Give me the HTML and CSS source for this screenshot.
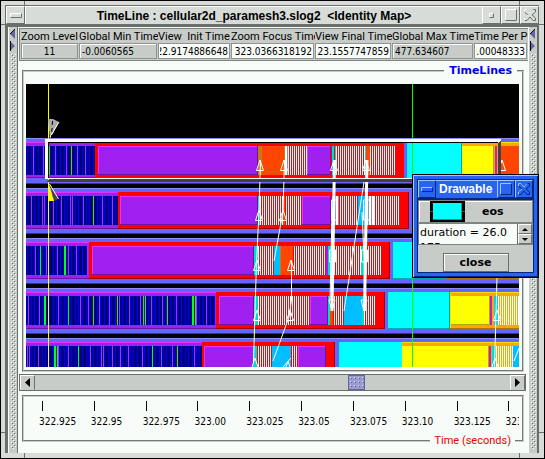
FILE: index.html
```html
<!DOCTYPE html>
<html lang="en">
<head>
<meta charset="utf-8">
<title>TimeLine</title>
<link rel="stylesheet" href="styles.css">
</head>
<body>
<div class="window">
  <header class="titlebar">
    <button class="wbtn" aria-label="Window menu"><svg width="12" height="5" viewBox="0 0 12 5"><path d="M.5 4.500V.5h11" fill="none" stroke="#fff"/><path d="M11.500 .5v4H.5" fill="none" stroke="#697069"/></svg></button>
    <h1 class="title">TimeLine : cellular2d_paramesh3.slog2  &lt;Identity Map&gt;</h1>
    <button class="wbtn" aria-label="Minimize"><svg width="5" height="5" viewBox="0 0 5 5"><path d="M.5 4.500V.5h4" fill="none" stroke="#fff"/><path d="M4.500 .5v4H.5" fill="none" stroke="#697069"/></svg></button>
    <button class="wbtn" aria-label="Maximize"><svg width="12" height="12" viewBox="0 0 12 12"><path d="M.5 11.500V.5h11" fill="none" stroke="#fff"/><path d="M11.500 .5v11H.5" fill="none" stroke="#697069"/></svg></button>
    <button class="wbtn" aria-label="Close"><svg width="14" height="14" viewBox="0 0 14 14"><path d="M1.500 4V1.500H4L7 5l3-3.500h2.500V4L9 7l3.500 3v2.500H10L7 9l-3 3.500H1.500V10L5 7Z" fill="#d8dcd8" stroke="#697069"/><path d="M1.500 4V1.500H4L7 5l3-3.500M1.500 12.500V10L5 7" fill="none" stroke="#fff"/></svg></button>
  </header>
  <div class="client">
    <div class="divider">
      <svg width="6" height="25" viewBox="0 0 6 25"><path d="M5 1v10L0 6Z" fill="#6464a0"/><path d="M5 1L0 6" stroke="#000"/><path d="M0 13v10l5-5Z" fill="#6464a0"/><path d="M.5 13v10" stroke="#000"/></svg>
      <div class="grip"></div>
    </div>
    <main class="main">
      <form class="fields">
        <label>Zoom Level<input class="center" readonly value="11"></label>
        <label>Global Min Time<input readonly value="-0.0060565"></label>
        <label>View  Init Time<input class="tail" value="322.9174886648"></label>
        <label>Zoom Focus Time<input class="tail" value="323.0366318192"></label>
        <label>View Final Time<input class="tail" value="323.1557747859"></label>
        <label>Global Max Time<input readonly value="477.634607"></label>
        <label>Time Per Pixel<input class="tail" value="0.00048333"></label>
      </form>
      <fieldset class="panel lines">
        <legend>TimeLines</legend>
        <svg class="canvas" viewBox="26 84 493 283" shape-rendering="crispEdges" role="img" aria-label="Process timelines">
          <defs>
            <pattern id="rw" width="2" height="10" patternUnits="userSpaceOnUse"><rect width="2" height="10" fill="#f00"/><rect width="1" height="10" fill="#fff"/></pattern>
            <pattern id="ow" width="2" height="10" patternUnits="userSpaceOnUse"><rect width="2" height="10" fill="#ffa500"/><rect width="1" height="10" fill="#fff"/></pattern>
            <pattern id="gw" width="3" height="10" patternUnits="userSpaceOnUse"><rect width="3" height="10" fill="#8c96aa"/><rect width="2" height="10" fill="#fff"/></pattern>
            <pattern id="nv" width="11" height="10" patternUnits="userSpaceOnUse"><rect width="11" height="10" fill="#00008c"/><path d="M1.500 0v10M5.500 0v10" stroke="#0000f0"/><path d="M3.500 0v10M7.500 0v10" stroke="#00005a"/><path d="M9.500 0v10" stroke="#0000dc"/></pattern>
            <g id="band"><path fill="#6464ff" d="M26 0h493v46H26z"/><path fill="#8c8cff" d="M26 0h493v1H26z"/><path fill="#3232a0" d="M26 45h493v1H26z"/></g>
            <path id="head" d="M0 0L-3.500 10.500H3.500Z" fill="none"/>
          </defs>
          <path fill="#000" d="M26 84h493v283H26z"/>
          <use href="#band" y="138"/><use href="#band" y="188"/><use href="#band" y="238"/><use href="#band" y="288"/><use href="#band" y="338"/>

          <g fill="#a020f0"><path d="M26 142h69v36H26zM26 192h92v37H26zM26 242h63v37H26zM26 292h190v37H26zM26 342h176v25H26z"/></g>
          <g fill="#e632ff"><path d="M26 142h69v1H26zM26 192h92v1H26zM26 242h63v1H26zM26 292h190v1H26zM26 342h176v1H26z"/></g>
          <g fill="#6e14a0"><path d="M26 177h69v1H26zM26 228h92v1H26zM26 278h63v1H26zM26 328h190v1H26z"/></g>

          <g fill="#f00"><path d="M95 142h309v37H95zM118 192h291v37H118zM89 242h301v37H89zM216 292h169v37H216zM202 342h133v25H202z"/></g>
          <g fill="#aa0000"><path d="M408 192h1v37H118v-1h290zM389 242h1v37H89v-1h300zM384 292h1v37H216v-1h168zM334 342h1v25h-1z"/></g>
          <g fill="#0ff"><path d="M407 142h55v37h-55zM393 242h53v37h-53zM388 292h62v37h-62zM339 342h63v25h-63z"/></g>
          <path fill="#00aaaa" d="M461 142h1v37h-1zM393 278h53v1h-53zM388 328h62v1h-62zM449 292h1v37h-1z"/>
          <g fill="#ffa500"><path d="M462 142h57v37h-57zM446 242h73v37h-73zM450 292h69v37h-69zM402 342h117v25H402z"/></g>
          <path fill="#ffdc00" d="M462 142h57v1h-57zM450 292h69v1h-69v36h1v-36zM402 342h117v1H402z"/>
          <path fill="#b47300" d="M450 328h69v1h-69zM446 278h73v1h-73z"/>

          <path fill="url(#nv)" d="M26 146h19v29H26zM49 146h46v29H49zM26 196h92v29H26zM26 246h62v29H26zM26 296h189v29H26zM26 346h176v21H26z"/>
          <path stroke="#a032ff" d="M33.500 146v29M43.500 146v29M55.500 146v29M66.500 146v29M77.500 146v29M85.500 146v29M31.500 196v29M42.500 196v29M44.500 196v29M53.500 196v29M61.500 196v29M70.500 196v29M72.500 196v29M83.500 196v29M102.500 196v29M112.500 196v29M35.500 246v29M46.500 246v29M57.500 246v29M68.500 246v29M76.500 246v29M87.500 246v29M28.500 296v29M39.500 296v29M58.500 296v29M80.500 296v29M88.500 296v29M99.500 296v29M109.500 296v29M119.500 296v29M129.500 296v29M140.500 296v29M151.500 296v29M162.500 296v29M176.500 296v29M196.500 296v29M206.500 296v29M27.500 346v21M29.500 346v21M38.500 346v21M58.500 346v21M68.500 346v21M90.500 346v21M101.500 346v21M103.500 346v21M112.500 346v21M120.500 346v21M128.500 346v21M142.500 346v21M161.500 346v21M172.500 346v21M194.500 346v21"/>
          <path stroke="#00ff1e" d="M49.500 146v29M71.500 146v29M93.500 196v29M40.500 246v29M64.500 246v29M65.500 246v29M44.500 296v29M45.500 296v29M68.500 296v29M93.500 296v29M117.500 296v29M143.500 296v29M145.500 296v29M167.500 296v29M192.500 296v29M193.500 296v29M195.500 296v29M54.500 346v21M55.500 346v21M57.500 346v21M78.500 346v21M152.500 346v21M177.500 346v21"/>

          <g fill="url(#rw)"><path d="M285 146h22v29h-22zM336 146h59v29h-59zM260 196h42v29h-42zM334 196h66v29h-66zM258 246h16v29h-16zM293 246h33v29h-33zM333 246h49v29h-49zM258 296h52v29h-52zM333 296h11v29h-11zM364 296h12v29h-12zM257 346h15v21h-15zM291 346h7v21h-7z"/></g>
          <path fill="url(#gw)" d="M285 146h4v29h-4zM334 196h5v29h-5zM367 196h7v29h-7z"/>
          <g fill="#a020f0"><path d="M98 146h160v29H98zM307 146h24v29h-24zM120 196h138v29H120zM302 196h29v29h-29zM92 246h162v29H92zM326 246h2v29h-2zM219 296h35v29h-35zM310 296h18v29h-18zM204 346h49v21h-49zM298 346h28v21h-28z"/></g>
          <path fill="#e632ff" d="M98 146h160v1H99v28h-1zM307 146h24v1h-23v28h-1zM120 196h138v1H121v28h-1zM302 196h29v1h-28v28h-1zM92 246h162v1H93v28h-1zM219 296h35v1h-34v28h-1zM310 296h18v1h-17v28h-1zM204 346h49v1h-48v20h-1zM298 346h28v1h-27v20h-1z"/>
          <path fill="#6e14a0" d="M257 146h1v29H98v-1h159zM330 146h1v29h-24v-1h23zM257 196h1v29H120v-1h137zM330 196h1v29h-29v-1h28zM253 246h1v29H92v-1h161zM253 296h1v29h-35v-1h34zM327 296h1v29h-18v-1h17zM325 346h1v21h-1z"/>
          <path fill="#ff4600" d="M258 146h27v29h-27zM501 146h18v29h-18zM366 146h4v29h-4zM283 196h2v29h-2zM280 246h13v29h-13zM330 296h3v29h-3z"/>
          <path fill="#c87814" d="M258 146h4v29h-4zM284 146h1v29h-1zM280 246h1v29h-1z"/>
          <path fill="#00dcc8" d="M332 146h2v29h-2zM335 146h1v29h-1zM365 146h1v29h-1zM258 196h2v29h-2zM332 196h2v29h-2zM254 246h4v29h-4zM328 246h5v29h-5zM361 246h5v29h-5zM254 296h4v29h-4zM328 296h2v29h-2zM362 296h2v29h-2zM253 346h4v21h-4zM494 296h4v29h-4zM492 346h4v21h-4z"/>
          <path fill="#00beff" d="M358 196h8v29h-8zM274 246h6v29h-6zM344 296h18v29h-18zM272 346h19v21h-19zM495 296h2v29h-2zM513 346h6v21h-6z"/>
          <path fill="#ff0" d="M462 146h32v29h-32zM451 296h38v29h-38zM402 346h86v21h-86z"/>
          <path fill="#aaaa00" d="M493 146h1v29h-1zM489 296h1v29h-39v-1h38zM488 346h1v21h-1z"/>
          <path fill="#be1edc" d="M495 146h2v29h-2zM490 296h2v29h-2zM489 346h2v21h-2z"/>
          <path fill="url(#ow)" d="M498 296h21v29h-21zM496 346h17v21h-17z"/>

          <path fill="#ff0" d="M48 84h1v283h-1z"/>
          <path fill="#0f0" d="M412 84h1v283h-1z"/>

          <g stroke="#fff" fill="none" shape-rendering="auto">
            <path d="M253.500 362L256.500 262 259 212 260.500 160M274 261L283 212 284.500 160M273 361L289 317 291.500 300V262M344 311L364 182M494.500 367L497 277M514 361L519 348M283 367L291 358"/>
            <path stroke-width="3" d="M332 311L334.500 160M364.500 311L367 160"/>
            <path d="M330 300L332 212M366 300L362 212"/>
            <use href="#head" x="260" y="160"/><use href="#head" x="284" y="160"/><use href="#head" x="334" y="160"/><use href="#head" x="366" y="160"/><use href="#head" x="502" y="160"/>
            <use href="#head" x="259" y="210"/><use href="#head" x="283" y="210"/>
            <path d="M331.500 200h6v20h-6zM363.500 200h6v20h-6zM329.500 250h6v12h-6zM361.500 250h6v12h-6zM329 300h6L332 311ZM361 300h6L364 311Z"/>
            <use href="#head" x="257" y="260"/><use href="#head" x="291" y="260"/><use href="#head" x="257" y="310"/><use href="#head" x="290" y="310"/><use href="#head" x="497" y="310"/>
            <use href="#head" x="255" y="358"/><use href="#head" x="288" y="361"/><use href="#head" x="495" y="358"/>
          </g>

          <path fill="#fff" d="M45 139h456v3H48v36h450v1H45z"/>
          <path fill="#000" d="M48 142h450v1H49v35h-1z"/>
          <path fill="#414141" d="M501 140v42H46l3-3h449V143z"/>
          <g shape-rendering="auto">
            <path fill="#aaa" d="M48 119h5l6 3-9 17z"/><path d="M59 122l-9 15" stroke="#fff"/><path d="M52.500 121l-1 16" stroke="#000" stroke-dasharray="4 3"/>
            <path fill="#ff0" d="M49 184l5 17h-5z"/><path fill="#444" d="M49.500 184l9 15-4 2z"/><path d="M49.500 184l9 15" stroke="#fff" fill="none"/>
          </g>
        </svg>
      </fieldset>
      <div class="scroll">
        <button class="sbtn" type="button" aria-label="Scroll left"><svg width="5" height="9" viewBox="0 0 5 9"><path d="M5 0v9L0 4.500Z"/></svg></button>
        <div class="track"><div class="thumb"></div></div>
        <button class="sbtn" type="button" aria-label="Scroll right"><svg width="5" height="9" viewBox="0 0 5 9"><path d="M0 0v9l5-4.500Z"/></svg></button>
      </div>
      <section class="panel ruler" aria-labelledby="unit">
        <div class="ticks">
          <span>322.925</span><span>322.95</span><span>322.975</span><span>323.00</span><span>323.025</span><span>323.05</span><span>323.075</span><span>323.10</span><span>323.125</span><span>323.15</span>
        </div>
        <p class="unit" id="unit">Time (seconds)</p>
      </section>
    </main>
    <div class="divider">
      <svg width="6" height="25" viewBox="0 0 6 25"><path d="M5 1v10L0 6Z" fill="#6464a0"/><path d="M5 1L0 6" stroke="#000"/><path d="M0 13v10l5-5Z" fill="#6464a0"/><path d="M.5 13v10" stroke="#000"/></svg>
      <div class="grip"></div>
    </div>
  </div>
  <section class="dialog" role="dialog" aria-label="Drawable">
    <header class="dtitle">
      <button class="dbtn" aria-label="Dialog menu"><svg width="12" height="5" viewBox="0 0 12 5"><path d="M.5 4.500V.5h11" fill="none" stroke="#a0c8ff"/><path d="M11.500 .5v4H.5" fill="none" stroke="#002882"/></svg></button>
      <h2>Drawable</h2>
      <button class="dbtn" aria-label="Maximize dialog"><svg width="12" height="12" viewBox="0 0 12 12"><path d="M.5 11.500V.5h11" fill="none" stroke="#a0c8ff"/><path d="M11.500 .5v11H.5" fill="none" stroke="#002882"/></svg></button>
      <button class="dbtn" aria-label="Close dialog"><svg width="14" height="14" viewBox="0 0 14 14"><path d="M1.500 4V1.500H4L7 5l3-3.500h2.500V4L9 7l3.500 3v2.500H10L7 9l-3 3.500H1.500V10L5 7Z" fill="#2864f0" stroke="#002882"/><path d="M1.500 4V1.500H4L7 5l3-3.500M1.500 12.500V10L5 7" fill="none" stroke="#a0c8ff"/></svg></button>
    </header>
    <div class="dbody">
      <div class="kind">
        <svg width="35" height="21" viewBox="0 0 35 21" shape-rendering="crispEdges"><path d="M0 0h35v21H0z"/><path d="M0 10h35v1H0z" fill="#f00"/><path d="M3 2h29v17H3z" fill="#0ff"/><path d="M31 2h1v17H3v-1h28z" fill="#00a0a0"/></svg>
        <span>eos</span>
      </div>
      <div class="info">
        <textarea readonly aria-label="Drawable details">duration = 26.0
175 msec</textarea>
        <div class="spin">
          <button aria-label="Scroll up"><svg width="6" height="3" viewBox="0 0 6 3"><path d="M0 3h6L3 0Z"/></svg></button>
          <button aria-label="Scroll down"><svg width="6" height="3" viewBox="0 0 6 3"><path d="M0 0h6L3 3Z"/></svg></button>
        </div>
      </div>
      <button class="close">close</button>
    </div>
  </section>
</div>
</body>
</html>
```
FILE: styles.css
```css
* { box-sizing: border-box; }
body {
  margin: 0;
  background: #f8fcf8;
  color: #000;
  font: 11px/13px "DejaVu Sans Condensed", "DejaVu Sans", sans-serif;
}
h1, h2, p { margin: 0; }
button { padding: 0; border: 0; background: none; font: inherit; color: inherit; }
svg { display: block; }

.window {
  position: relative;
  display: flex;
  flex-direction: column;
  min-height: 100vh;
  padding: 4px 5px 5px 4px;
  border: 1px solid #000;
  background:
    linear-gradient(#697069, #697069) 23px 0 / 1px 5px no-repeat,
    linear-gradient(#697069, #697069) right 24px top 0 / 1px 5px no-repeat,
    linear-gradient(#697069, #697069) 0 23px / 5px 1px no-repeat,
    linear-gradient(#697069, #697069) right 0 top 23px / 5px 1px no-repeat,
    linear-gradient(#697069, #697069) left 0 bottom 25px / 5px 1px no-repeat,
    linear-gradient(#697069, #697069) right 0 bottom 25px / 5px 1px no-repeat,
    linear-gradient(#697069, #697069) left 23px bottom 0 / 1px 5px no-repeat,
    linear-gradient(#697069, #697069) right 24px bottom 0 / 1px 5px no-repeat,
    #d8dcd8;
}

.titlebar { display: flex; height: 19px; border-top: 1px solid #697069; border-left: 1px solid #697069; }
.wbtn {
  display: grid;
  place-items: center;
  width: 19px;
  border: 1px solid;
  border-color: #fff #697069 #697069 #fff;
}
.title {
  flex: 1;
  border-top: 1px solid #fff;
  border-left: 1px solid #fff;
  text-align: center;
  white-space: pre;
  overflow: hidden;
  font: bold 12px/18px "Liberation Sans", Arial, sans-serif;
}

.client {
  flex: 1;
  display: flex;
  min-width: 0;
  border: solid #697069;
  border-width: 3px 1px 0 3px;
  background: #f8fcf8;
}
.divider {
  display: flex;
  flex-direction: column;
  align-items: center;
  flex: none;
  gap: 1px;
  width: 10px;
  padding: 1px 1px 4px;
  border-left: 1px solid #fff;
  border-right: 1px solid #697069;
  background: #c8ccc8;
}
.grip {
  flex: 1;
  width: 5px;
  background:
    conic-gradient(at 1px 1px, transparent 75%, #fff 0) 0 0 / 4px 4px,
    conic-gradient(at 1px 1px, transparent 75%, #697069 0) 1px 1px / 4px 4px,
    conic-gradient(at 1px 1px, transparent 75%, #fff 0) 2px 2px / 4px 4px,
    conic-gradient(at 1px 1px, transparent 75%, #697069 0) 3px 3px / 4px 4px;
}

.main { flex: 1; min-width: 0; display: flex; flex-direction: column; }
.fields {
  display: grid;
  grid-template-columns: 58fr 79fr 73fr 84fr 77fr 82fr 54fr;
  margin: 1px 0 0 1px;
  padding: 1px 0 1px 1px;
  border: solid #808480;
  border-width: 1px 0 1px 1px;
  background: #c8ccc8;
  font: 11px/13px Roboto, sans-serif;
}
.fields label { min-width: 0; overflow: hidden; white-space: pre; }
.fields input {
  display: block;
  width: calc(100% - 1px);
  height: 16px;
  padding: 0 2px;
  border: 1px solid #909490;
  outline: 0;
  background: #f8fcf8;
  font: 10px/13px "DejaVu Sans Condensed", "DejaVu Sans", sans-serif;
  box-shadow: inset 1px 1px #fff;
}
.fields input[readonly] { background: #c8ccc8; }
.fields .center { text-align: center; }
.fields .tail { direction: rtl; padding: 0 1px; }

.panel {
  min-width: 0;
  margin: 0 4px;
  border: 2px groove #c8ccc8;
}
.lines { margin-top: 2px; padding: 6px 3px 3px 2px; }
.lines legend {
  margin: 0 2px 0 auto;
  padding: 0 5px;
  color: #0000f0;
  font: bold 11px/15px "DejaVu Sans", sans-serif;
}
.canvas { width: 100%; height: auto; }

.scroll {
  display: flex;
  height: 17px;
  margin: 2px 2px 0 1px;
  border: 1px solid #697069;
  background: #c8ccc8;
}
.sbtn {
  display: grid;
  place-items: center;
  width: 15px;
  border: 1px solid;
  border-color: #fff #697069 #c8ccc8 #fff;
}
.track { flex: 1; display: flex; padding-left: 62%; }
.thumb {
  width: 17px;
  border: 1px solid #6464a0;
  background:
    conic-gradient(at 1px 1px, transparent 75%, #dcdcff 0) 1px 1px / 4px 4px,
    conic-gradient(at 1px 1px, transparent 75%, #6464a0 0) 2px 2px / 4px 4px,
    #9c9ccc;
}

.ruler {
  position: relative;
  height: 47px;
  margin-top: 4px;
  padding: 4px 3px 0 15px;
}
.unit {
  position: absolute;
  right: 7px;
  bottom: -7px;
  padding: 0 4px;
  background: #f8fcf8;
  color: #e60000;
  font: 11px/13px Roboto, sans-serif;
}
.ticks { display: flex; overflow: hidden; font-size: 10px; }
.ticks span { flex: 0 0 10.800%; }
.ticks span::before { content: ""; display: block; width: 1px; height: 10px; margin: 0 0 4px 3px; background: #000; }

.dialog {
  position: absolute;
  top: 173px;
  right: 5px;
  display: flex;
  flex-direction: column;
  width: 127px;
  height: 104px;
  padding: 4px;
  border: 1px solid #000;
  background: #2864f0;
  box-shadow: inset 1px 1px #a0c8ff, inset -1px -1px #002882;
}
.dtitle { display: flex; height: 20px; border: 1px solid #002882; color: #fff; }
.dbtn {
  display: grid;
  place-items: center;
  flex: none;
  width: 18px;
  border: 1px solid;
  border-color: #a0c8ff #002882 #002882 #a0c8ff;
}
.dtitle h2 {
  flex: 1;
  min-width: 0;
  overflow: hidden;
  padding-left: 3px;
  border-top: 1px solid #a0c8ff;
  white-space: nowrap;
  font: bold 12px/16px "Liberation Sans", Arial, sans-serif;
}
.dbody {
  flex: 1;
  display: flex;
  flex-direction: column;
  min-height: 0;
  border: 1px solid #002882;
  background: #c8ccc8;
  font-family: "DejaVu Sans", sans-serif;
}
.kind {
  display: flex;
  align-items: center;
  gap: 17px;
  height: 24px;
  padding-left: 11px;
  border: 1px solid #808480;
  box-shadow: inset 1px 1px #fff;
  font-weight: bold;
}
.info { display: flex; height: 22px; border: 1px solid #808480; }
.info textarea {
  flex: 1;
  min-width: 0;
  padding: 1px 0 0 1px;
  border: 0;
  outline: 0;
  resize: none;
  overflow: hidden;
  background: #f8fcf8;
  font: 11px/15px "DejaVu Sans", sans-serif;
}
.spin { display: grid; width: 15px; border-left: 1px solid #697069; }
.spin button { display: grid; place-items: center; border: 1px solid; border-color: #fff #697069 #697069 #fff; }
.close {
  align-self: center;
  width: 66px;
  height: 22px;
  margin-top: 8px;
  border: 1px solid #697069;
  box-shadow: inset 1px 1px #fff;
  font-weight: bold;
}
```
